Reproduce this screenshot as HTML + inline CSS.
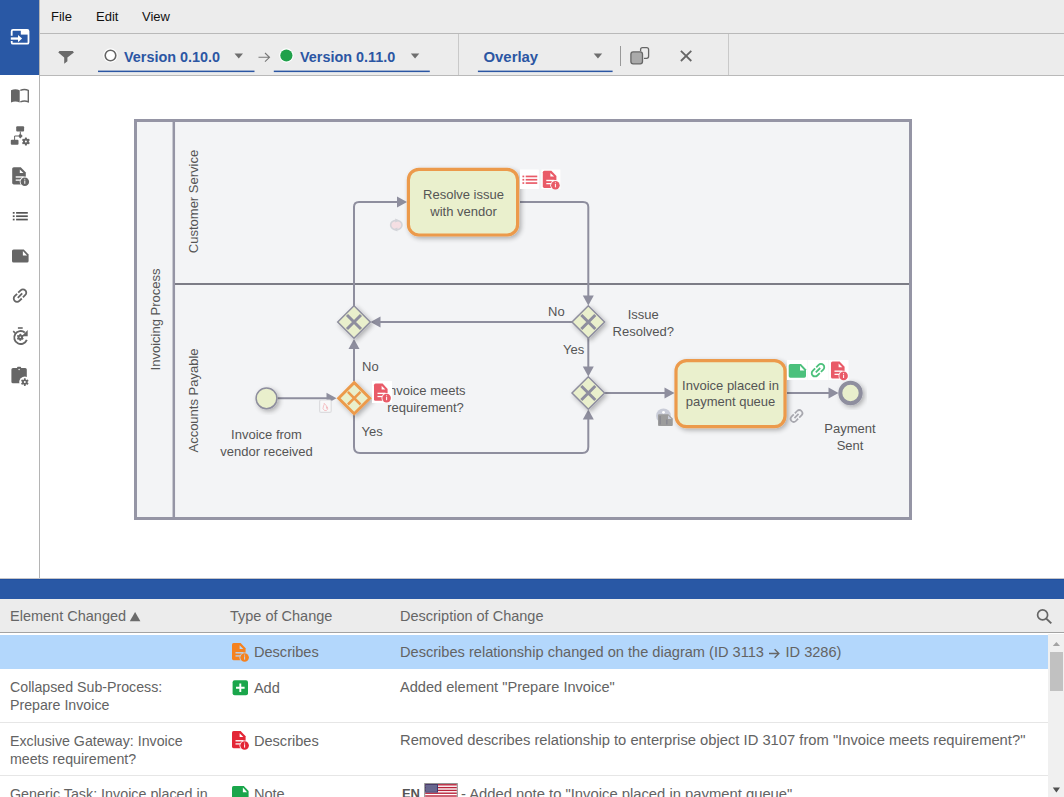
<!DOCTYPE html>
<html><head><meta charset="utf-8">
<style>
*{margin:0;padding:0;box-sizing:border-box}
html,body{width:1064px;height:797px;overflow:hidden;background:#fff;font-family:"Liberation Sans",sans-serif;position:relative}
.a{position:absolute}
.side{left:0;top:0;width:39px;height:578px;background:#fff}
.sideblue{left:0;top:0;width:39px;height:75px;background:#2958a5}
.sideline{left:39px;top:0;width:1px;height:578px;background:#b4b4b4}
.menu{left:40px;top:0;width:1024px;height:34px;background:#ececec;border-bottom:1px solid #b9b9b9}
.menu span{position:absolute;top:9px;font-size:13px;color:#111}
.tool{left:40px;top:34px;width:1024px;height:41px;background:#ececec}
.toolline{left:40px;top:75px;width:1024px;height:1px;background:#b9b9b9}
.vt{font-weight:bold;font-size:14.4px;color:#2b56a3;white-space:nowrap;top:49px!important}
.ul{height:2px;background:#2b56a3}
.tri{width:0;height:0;border-left:4.5px solid transparent;border-right:4.5px solid transparent;border-top:5px solid #6e6e6e}
.blue{left:0;top:579px;width:1064px;height:20px;background:#2958a5}
.thead{left:0;top:599px;width:1064px;height:34px;background:#ececec;border-bottom:1px solid #a3a3a3}
.th{top:608px;font-size:14.5px;color:#666;white-space:nowrap}
.td{font-size:14.6px;color:#636363;white-space:nowrap;line-height:18px}
.sep{left:0;width:1048px;height:1px;background:#e6e6e6}
</style></head><body>
<div class="a sideblue"></div>
<div class="a sideline"></div>
<div class="a menu"><span style="left:11px">File</span><span style="left:56px">Edit</span><span style="left:102px">View</span></div>
<div class="a tool"></div>
<div class="a toolline"></div>
<div class="a vt" style="left:124px;top:48px">Version 0.10.0</div>
<div class="a vt" style="left:300px;top:48px">Version 0.11.0</div>
<div class="a vt" style="left:483.5px;top:48px;font-size:14.9px">Overlay</div>

<!-- canvas -->
<svg class="a" style="left:0;top:0" width="1064" height="797" viewBox="0 0 1064 797" id="dg">
<defs>
 <mask id="mdoc" maskUnits="userSpaceOnUse" x="-2" y="-2" width="22" height="24">
  <rect x="-2" y="-2" width="22" height="24" fill="#fff"/>
  <path d="M7.6 2.2V5.9H11.3Z" fill="#000"/>
  <rect x="3.5" y="9.1" width="8" height="1.35" fill="#000"/>
  <rect x="3.5" y="12.3" width="5.5" height="1.25" fill="#000"/>
  <circle cx="12.6" cy="14.5" r="5.1" fill="#000"/>
 </mask>
 <mask id="mi" maskUnits="userSpaceOnUse" x="-2" y="-2" width="22" height="24">
  <rect x="-2" y="-2" width="22" height="24" fill="#fff"/>
  <rect x="12.1" y="13.3" width="1" height="3.3" fill="#000"/>
  <circle cx="12.6" cy="12.1" r=".55" fill="#000"/>
 </mask>
 <symbol id="docinfo" viewBox="0 0 17 18.5" overflow="visible">
  <path d="M0 1.6Q0 0 1.6 0H8.6L13.6 5.3V15.6Q13.6 17.2 12 17.2H1.6Q0 17.2 0 15.6Z" mask="url(#mdoc)"/>
  <circle cx="12.6" cy="14.5" r="4.3" mask="url(#mi)"/>
 </symbol>
 <symbol id="note" viewBox="0 0 16.6 13.1" overflow="visible">
  <path d="M0 1.6Q0 0 1.6 0H11.8L16.6 5.1V11.5Q16.6 13.1 15 13.1H1.6Q0 13.1 0 11.5Z"/>
  <path d="M10.9 1.6V6.2H15.1Z" fill="#fff"/>
 </symbol>
 <symbol id="link" viewBox="-8 -8 16 16" overflow="visible">
  <g transform="rotate(-45)" fill="none" stroke-width="1.8">
   <path d="M0.8 -3.3H4.2A3.3 3.3 0 0 1 4.2 3.3H0.8M-0.8 3.3H-4.2A3.3 3.3 0 0 1 -4.2 -3.3H-0.8M-3.1 0H3.1"/>
  </g>
 </symbol>
 <symbol id="list" viewBox="0 0 15 8.5" overflow="visible">
  <rect x="0" y="0" width="1.8" height="1.7"/><rect x="3.3" y="0" width="11.7" height="1.7"/>
  <rect x="0" y="3.35" width="1.8" height="1.7"/><rect x="3.3" y="3.35" width="11.7" height="1.7"/>
  <rect x="0" y="6.7" width="1.8" height="1.7"/><rect x="3.3" y="6.7" width="11.7" height="1.7"/>
 </symbol>
 <pattern id="stars" width="1.9" height="1.35" patternUnits="userSpaceOnUse"><circle cx=".95" cy=".67" r=".45" fill="#fff"/></pattern>
 <filter id="sh" x="-30%" y="-30%" width="160%" height="160%">
  <feGaussianBlur in="SourceAlpha" stdDeviation="2.6"/>
  <feOffset dx="1.5" dy="2.2"/>
  <feComponentTransfer><feFuncA type="linear" slope="0.3"/></feComponentTransfer>
  <feMerge><feMergeNode/><feMergeNode in="SourceGraphic"/></feMerge>
 </filter>
</defs>

<g id="sidebar">
 <!-- exit icon -->
 <path d="M11.7 35.8V31.2Q11.7 29.9 13 29.9H27.2Q28.5 29.9 28.5 31.2V42.4Q28.5 43.7 27.2 43.7H13Q11.7 43.7 11.7 42.4V41.1" fill="none" stroke="#fff" stroke-width="1.8"/>
 <rect x="20.8" y="29.9" width="7.7" height="4.7" fill="#fff"/>
 <rect x="10.8" y="37.4" width="8" height="2.3" fill="#fff"/>
 <path d="M18 34.9L22.1 38.55L18 42.2Z" fill="#fff"/>
 <g fill="#666" stroke="#666">
 <!-- book -->
 <path d="M11 90.3Q15.3 88.4 19.7 90.3V102.5Q15.3 100.6 11 102.5Z" stroke="none"/>
 <path d="M20.3 90.4Q24.5 88.7 28.3 90.4V101.8Q24.5 100.2 20.3 101.9" fill="none" stroke-width="1.4"/>
 <!-- diagram gear -->
 <rect x="16.2" y="126.3" width="7.9" height="5.2" rx="1" stroke="none"/>
 <rect x="10.8" y="139.8" width="7.7" height="5" rx="1" stroke="none"/>
 <path d="M20.3 133.6L22.7 136L20.3 138.4L17.9 136Z" stroke="none"/>
 <path d="M20.3 131.5V134M18 136H14.6V140" fill="none" stroke-width="1"/>
 <g transform="translate(25.9 141.5)" stroke="none">
  <circle r="2.9"/>
  <rect x="-1" y="-4.1" width="2" height="8.2" rx=".5"/>
  <rect x="-1" y="-4.1" width="2" height="8.2" rx=".5" transform="rotate(60)"/>
  <rect x="-1" y="-4.1" width="2" height="8.2" rx=".5" transform="rotate(120)"/>
  <circle r="1" fill="#fff"/>
 </g>
 <!-- doc info -->
 <use href="#docinfo" x="12.2" y="167.2" width="17" height="18.5" stroke="none"/>
 <!-- list -->
 <use href="#list" x="12.8" y="212" width="15" height="8.5" stroke="none" fill="#555"/>
 <!-- note -->
 <use href="#note" x="12" y="249.4" width="16.6" height="13.1" stroke="none"/>
 <!-- link -->
 <use href="#link" x="12" y="287.6" width="16" height="16"/>

 <!-- timer refresh -->
 <rect x="17.9" y="327.2" width="4.8" height="1.6" stroke="none"/>
 <path d="M26.8 339.9A6.5 6.5 0 1 1 24.8 332.4" fill="none" stroke-width="1.9"/>
 <path d="M27.7 330V336.3H21.6Z" stroke="none"/>
 <path d="M13.2 331.2L15.3 333.1" fill="none" stroke-width="1.6"/>
 <g transform="translate(20.3 337.3)" stroke="none">
  <circle r="2.6"/>
  <rect x="-.9" y="-3.5" width="1.8" height="7" rx=".4"/>
  <rect x="-.9" y="-3.5" width="1.8" height="7" rx=".4" transform="rotate(60)"/>
  <rect x="-.9" y="-3.5" width="1.8" height="7" rx=".4" transform="rotate(120)"/>
  <circle r=".8" fill="#fff"/>
 </g>
 <!-- clipboard gear -->
 <path d="M11.4 369.5Q11.4 367.9 13 367.9H17.1V367.6Q17.1 366.8 17.9 366.8H20.3Q21.1 366.8 21.1 367.6V367.9H25.2Q26.8 367.9 26.8 369.5V383.3H13Q11.4 383.3 11.4 381.7Z" stroke="none"/>
 <circle cx="24.8" cy="382.1" r="5.6" fill="#fff" stroke="none"/>
 <circle cx="19.1" cy="369.5" r=".7" fill="#fff" stroke="none"/>
 <g transform="translate(24.8 382.1)" stroke="none">
  <circle r="2.7"/>
  <rect x="-.9" y="-3.9" width="1.8" height="7.8" rx=".4"/>
  <rect x="-.9" y="-3.9" width="1.8" height="7.8" rx=".4" transform="rotate(60)"/>
  <rect x="-.9" y="-3.9" width="1.8" height="7.8" rx=".4" transform="rotate(120)"/>
  <circle r="1" fill="#fff"/>
 </g>
 </g>
</g>

<g id="toolbar">
 <path d="M58.3 52.6L59.4 51H72.8L73.9 52.6L67.4 57.6V61.3L64.2 63.7V57.6Z" fill="#6a6a6a"/>
 <circle cx="110.5" cy="55.5" r="7.2" fill="#fff"/>
 <circle cx="110.5" cy="55.5" r="5.3" fill="#fff" stroke="#666" stroke-width="1.6"/>
 <rect x="98" y="70.6" width="156.5" height="1.5" fill="#2b56a3"/>
 <path d="M234.5 53.6H243L238.75 58.6Z" fill="#6e6e6e"/>
 <path d="M258.5 57.3H269.5M265 53L269.5 57.3L265 61.6" fill="none" stroke="#777" stroke-width="1.1"/>
 <circle cx="286.4" cy="55.5" r="7.2" fill="#fff"/>
 <circle cx="286.4" cy="55.5" r="6.1" fill="#20a04a"/>
 <rect x="273.8" y="70.6" width="156" height="1.5" fill="#2b56a3"/>
 <path d="M410.8 53.6H419.3L415.05 58.6Z" fill="#6e6e6e"/>
 <rect x="458" y="34" width="1" height="41" fill="#c9c9c9"/>
 <rect x="477.9" y="70.6" width="134.7" height="1.5" fill="#2b56a3"/>
 <path d="M593.7 53.6H602.2L597.95 58.6Z" fill="#6e6e6e"/>
 <rect x="620" y="46" width="1" height="20" fill="#999"/>
 <path d="M640.6 51.3V49.5Q640.6 47.6 642.5 47.6H646.6Q648.6 47.6 648.6 49.5V56.3Q648.6 58.3 646.6 58.3H643.9" fill="none" stroke="#666" stroke-width="1.3"/>
 <rect x="630.9" y="51.9" width="11.6" height="11.9" rx="2.3" fill="#aaa" stroke="#666" stroke-width="1.3"/>
 <path d="M680.9 50.8L691.3 61M691.3 50.8L680.9 61" stroke="#666" stroke-width="1.8"/>
 <rect x="728" y="34" width="1" height="41" fill="#c9c9c9"/>
</g>
<rect x="135.5" y="120.5" width="775" height="398" fill="#f3f4f6" stroke="#9595a5" stroke-width="3"/>
<path d="M173.8 122V517" stroke="#9595a5" stroke-width="2.5"/>
<path d="M175 284H909" stroke="#7c7c86" stroke-width="2"/>
<text font-family="Liberation Sans" font-size="13" fill="#555" text-anchor="middle" transform="translate(160 319.5) rotate(-90)">Invoicing Process</text>
<text font-family="Liberation Sans" font-size="13" fill="#555" text-anchor="middle" transform="translate(198.3 201.5) rotate(-90)">Customer Service</text>
<text font-family="Liberation Sans" font-size="13" fill="#555" text-anchor="middle" transform="translate(198.3 400.5) rotate(-90)">Accounts Payable</text>
<g fill="none" stroke="#8e8e9e" stroke-width="2">
<path d="M277.5 398.3H328"/>
<path d="M354 381V348"/>
<path d="M354 306V207Q354 202 359 202H398"/>
<path d="M520 202H583Q588.3 202 588.3 207V296"/>
<path d="M572 322H380"/>
<path d="M588.3 338V367"/>
<path d="M354 415V447Q354 453 360 453H582.3Q588.3 453 588.3 447V419"/>
<path d="M604.3 393H665"/>
<path d="M787 393H829"/>
</g>
<path d="M336.5 398.3 L326.5 392.8 L326.5 403.8 Z" fill="#8e8e9e"/>
<path d="M354.0 339.0 L348.5 349.0 L359.5 349.0 Z" fill="#8e8e9e"/>
<path d="M407.0 202.0 L397.0 196.5 L397.0 207.5 Z" fill="#8e8e9e"/>
<path d="M588.3 305.5 L582.8 295.5 L593.8 295.5 Z" fill="#8e8e9e"/>
<path d="M370.5 322.0 L380.5 316.5 L380.5 327.5 Z" fill="#8e8e9e"/>
<path d="M588.3 376.5 L582.8 366.5 L593.8 366.5 Z" fill="#8e8e9e"/>
<path d="M588.3 409.5 L582.8 419.5 L593.8 419.5 Z" fill="#8e8e9e"/>
<path d="M674.5 393.0 L664.5 387.5 L664.5 398.5 Z" fill="#8e8e9e"/>
<path d="M838.5 393.0 L828.5 387.5 L828.5 398.5 Z" fill="#8e8e9e"/>
<g filter="url(#sh)"><path d="M337.7 322.0 L354.0 305.7 L370.3 322.0 L354.0 338.3 Z" fill="#e9efcc" stroke="#8e8e9e" stroke-width="1.5" stroke-linejoin="miter"/></g><path d="M347.0 315.0 L361.0 329.0 M361.0 315.0 L347.0 329.0" stroke="#8e8e9e" stroke-width="3"/>
<g filter="url(#sh)"><path d="M572.0 322.0 L588.3 305.7 L604.6 322.0 L588.3 338.3 Z" fill="#e9efcc" stroke="#8e8e9e" stroke-width="1.5" stroke-linejoin="miter"/></g><path d="M581.3 315.0 L595.3 329.0 M595.3 315.0 L581.3 329.0" stroke="#8e8e9e" stroke-width="3"/>
<g filter="url(#sh)"><path d="M572.0 393.0 L588.3 376.7 L604.6 393.0 L588.3 409.3 Z" fill="#e9efcc" stroke="#8e8e9e" stroke-width="1.5" stroke-linejoin="miter"/></g><path d="M581.3 386.0 L595.3 400.0 M595.3 386.0 L581.3 400.0" stroke="#8e8e9e" stroke-width="3"/>
<g filter="url(#sh)"><path d="M338.6 398.2 L354.2 382.6 L369.8 398.2 L354.2 413.8 Z" fill="#e9efcc" stroke="#ec9a4b" stroke-width="2.9" stroke-linejoin="miter"/></g><path d="M347.9 391.9 L360.5 404.5 M360.5 391.9 L347.9 404.5" stroke="#ec9a4b" stroke-width="2.5"/>
<g filter="url(#sh)"><circle cx="266.5" cy="398.3" r="10.4" fill="#e9efcc" stroke="#8e8e9e" stroke-width="1.5"/></g>
<g filter="url(#sh)"><circle cx="850.5" cy="393" r="10.2" fill="#e9efcc" stroke="#8e8e9e" stroke-width="4"/></g>
<g filter="url(#sh)"><rect x="408.4" y="169.3" width="109.2" height="65.7" rx="10.5" fill="#eaf0cd" stroke="#ec9a4b" stroke-width="3.2"/></g>
<g filter="url(#sh)"><rect x="676" y="360.6" width="109" height="66" rx="10.5" fill="#eaf0cd" stroke="#ec9a4b" stroke-width="3.2"/></g>
<text font-family="Liberation Sans" font-size="13" fill="#555" text-anchor="middle"><tspan x="463.5" y="198.8">Resolve issue</tspan><tspan x="463.5" y="216">with vendor</tspan></text>
<text font-family="Liberation Sans" font-size="13" fill="#555" text-anchor="middle"><tspan x="730.5" y="389.5">Invoice placed in</tspan><tspan x="730.5" y="406.4">payment queue</tspan></text>
<text font-family="Liberation Sans" font-size="13" fill="#555"><tspan x="548" y="316">No</tspan></text>
<text font-family="Liberation Sans" font-size="13" fill="#555"><tspan x="563" y="353.8">Yes</tspan></text>
<text font-family="Liberation Sans" font-size="13" fill="#555"><tspan x="362" y="371">No</tspan></text>
<text font-family="Liberation Sans" font-size="13" fill="#555"><tspan x="361.5" y="435.7">Yes</tspan></text>
<text font-family="Liberation Sans" font-size="13" fill="#555" text-anchor="middle"><tspan x="643.3" y="319">Issue</tspan><tspan x="643.3" y="335.9">Resolved?</tspan></text>
<text font-family="Liberation Sans" font-size="13" fill="#555" text-anchor="middle"><tspan x="425.5" y="395">Invoice meets</tspan><tspan x="425.5" y="412">requirement?</tspan></text>
<text font-family="Liberation Sans" font-size="13" fill="#555" text-anchor="middle"><tspan x="266.5" y="439.2">Invoice from</tspan><tspan x="266.5" y="456">vendor received</tspan></text>
<text font-family="Liberation Sans" font-size="13" fill="#555" text-anchor="middle"><tspan x="850" y="432.9">Payment</tspan><tspan x="850" y="449.8">Sent</tspan></text>
<rect x="520" y="169.5" width="18.8" height="19.5" fill="#fff"/>
<rect x="541.4" y="169.5" width="19" height="19.5" fill="#fff"/>
<use href="#list" x="522.1" y="175.6" width="15.5" height="8.4" fill="#e95b68"/>
<use href="#docinfo" x="542.8" y="170.7" width="17" height="18.5" fill="#e95b68"/>
<rect x="372" y="381" width="20" height="22" fill="#fff"/>
<use href="#docinfo" x="374" y="383.6" width="17" height="18.5" fill="#e95b68"/>
<rect x="787" y="360" width="20" height="20" fill="#fff"/>
<rect x="807.5" y="360" width="20.5" height="20" fill="#fff"/>
<rect x="828.5" y="360" width="20" height="20" fill="#fff"/>
<use href="#note" x="788.7" y="363.9" width="17.3" height="13.8" fill="#4cc17c"/>
<use href="#link" x="810" y="362.2" width="16" height="16" fill="#4cc17c" stroke="#4cc17c"/>
<use href="#docinfo" x="831" y="361.4" width="17" height="18.5" fill="#e95b68"/>
<use href="#link" x="789" y="408.5" width="15" height="15" fill="#a0a0a8" stroke="#a0a0a8" opacity=".9"/>
<circle cx="663.5" cy="415.8" r="7.4" fill="#c9ccd8"/><circle cx="663.5" cy="412.3" r="1.4" fill="#fff"/>
<path d="M658 415.2Q658 414.2 659 414.2H668.3L672.8 418.6V424.9Q672.8 425.9 671.8 425.9H659Q658 425.9 658 424.9Z" fill="#9c9c9c"/><rect x="659.3" y="416" width="1.6" height="8.5" fill="#8a8a92"/><rect x="666" y="419.5" width="1.6" height="5" fill="#8a8a92"/><path d="M668 415.3V419H671.6Z" fill="#c9ccd8"/>
<ellipse cx="396.3" cy="225" rx="5.7" ry="4.6" fill="#f5dfe3" stroke="#d3d4d9" stroke-width="1.6"/><path d="M395.2 218.6L399.4 220.4L395.2 222.6Z" fill="#d3d4d9"/><path d="M397.4 231.4L393.2 229.6L397.4 227.4Z" fill="#d3d4d9"/><rect x="319.6" y="400" width="11.6" height="12.4" rx="1.5" fill="#f8f8f9" stroke="#dcdcdf" stroke-width="1.2"/><path d="M324.5 410.5Q322 409 323.5 406Q324.5 404.5 324.2 403.3Q327.2 405.5 326.6 408.4Q327.2 407.6 327.3 406.8Q328.8 409.6 326.2 410.6Z" fill="none" stroke="#f2b5b9" stroke-width=".8"/></svg>

<div class="a blue"></div><div class="a" style="left:0;top:578px;width:1064px;height:1px;background:#c4c4c8"></div><div class="a" style="left:0;top:579px;width:1064px;height:1px;background:#1f4f9f"></div>
<div class="a thead"></div>
<div class="a th" style="left:10px">Element Changed</div>
<div class="a th" style="left:230px">Type of Change</div>
<div class="a th" style="left:400px">Description of Change</div>

<div class="a" style="left:0;top:635px;width:1048px;height:34px;background:#b3d7fc"></div>
<div class="a sep" style="top:722px"></div>
<div class="a sep" style="top:775px"></div>
<div class="a" style="left:1048px;top:634px;width:16px;height:163px;background:#f0f0f0"></div>
<div class="a" style="left:1050px;top:652px;width:13px;height:39px;background:#c1c1c1"></div>
<svg class="a" style="left:0;top:0" width="1064" height="797" viewBox="0 0 1064 797">
 <path d="M1052.8 645.9L1056.4 641.9L1060 645.9Z" fill="#a3a3a3"/>
 <path d="M129.8 621.2L135.1 611.9L140.4 621.2Z" fill="#6b6b6b"/>
 <path d="M1052.8 787.4L1056.4 792.6L1060 787.4Z" fill="#505050"/>
 <circle cx="1042.6" cy="614.9" r="5" fill="none" stroke="#666" stroke-width="1.7"/>
 <path d="M1046.3 618.6L1051.3 623.4" stroke="#666" stroke-width="2"/>
 <use href="#docinfo" x="232" y="643" width="17" height="18.5" fill="#f58220"/>
 <rect x="232.6" y="680.3" width="15.4" height="14.9" rx="2" fill="#1aa64b"/>
 <path d="M240.3 683.5V692.1M236 687.8H244.6" stroke="#fff" stroke-width="1.9"/>
 <use href="#docinfo" x="232" y="731" width="17" height="18.5" fill="#e32636"/>
 <use href="#note" x="232" y="786" width="16.6" height="13.1" fill="#1aa64b"/>
 <rect x="424.7" y="783.6" width="32.6" height="16" fill="#fff" stroke="#8a8a8a" stroke-width="1"/>
 <g fill="#b8233a">
  <rect x="425.2" y="784.1" width="31.6" height="1.4"/>
  <rect x="425.2" y="786.9" width="31.6" height="1.4"/>
  <rect x="425.2" y="789.7" width="31.6" height="1.4"/>
  <rect x="425.2" y="792.5" width="31.6" height="1.4"/>
  <rect x="425.2" y="795.3" width="31.6" height="1.4"/>
 </g>
 <rect x="425.2" y="784.1" width="12.8" height="8.5" fill="#3c3b6e"/>
 <g fill="#fff" opacity=".85">
  <rect x="426" y="785" width="11" height="6.8" fill="url(#stars)"/>
 </g>
</svg>
<div class="a td" style="left:253.9px;top:642.5px">Describes</div>
<div class="a td" style="left:400px;top:642.5px">Describes relationship changed on the diagram (ID 3113<span style="display:inline-block;width:21.5px;height:10px;position:relative"><svg style="position:absolute;left:5.5px;top:1px" width="11" height="11" viewBox="0 0 11 11"><path d="M0 5.5H10M5.6 1.2L9.9 5.5L5.6 9.8" fill="none" stroke="#666" stroke-width="1.3"/></svg></span>ID 3286)</div>
<div class="a td" style="left:10px;top:678px;font-size:14.2px">Collapsed Sub-Process:<br>Prepare Invoice</div>
<div class="a td" style="left:253.9px;top:679px">Add</div>
<div class="a td" style="left:400px;top:678px">Added element "Prepare Invoice"</div>
<div class="a td" style="left:10px;top:731.5px;font-size:14.2px">Exclusive Gateway: Invoice<br>meets requirement?</div>
<div class="a td" style="left:253.9px;top:732px">Describes</div>
<div class="a td" style="left:400px;top:731px;font-size:14.75px">Removed describes relationship to enterprise object ID 3107 from "Invoice meets requirement?"</div>
<div class="a td" style="left:10px;top:785px;font-size:14.3px">Generic Task: Invoice placed in</div>
<div class="a td" style="left:253.9px;top:785px">Note</div>
<div class="a td" style="left:401.9px;top:785px;font-weight:bold;font-size:13px;color:#555">EN</div>
<div class="a td" style="left:461px;top:785px;font-size:14.8px">- Added note to "Invoice placed in payment queue"</div>
</body></html>
